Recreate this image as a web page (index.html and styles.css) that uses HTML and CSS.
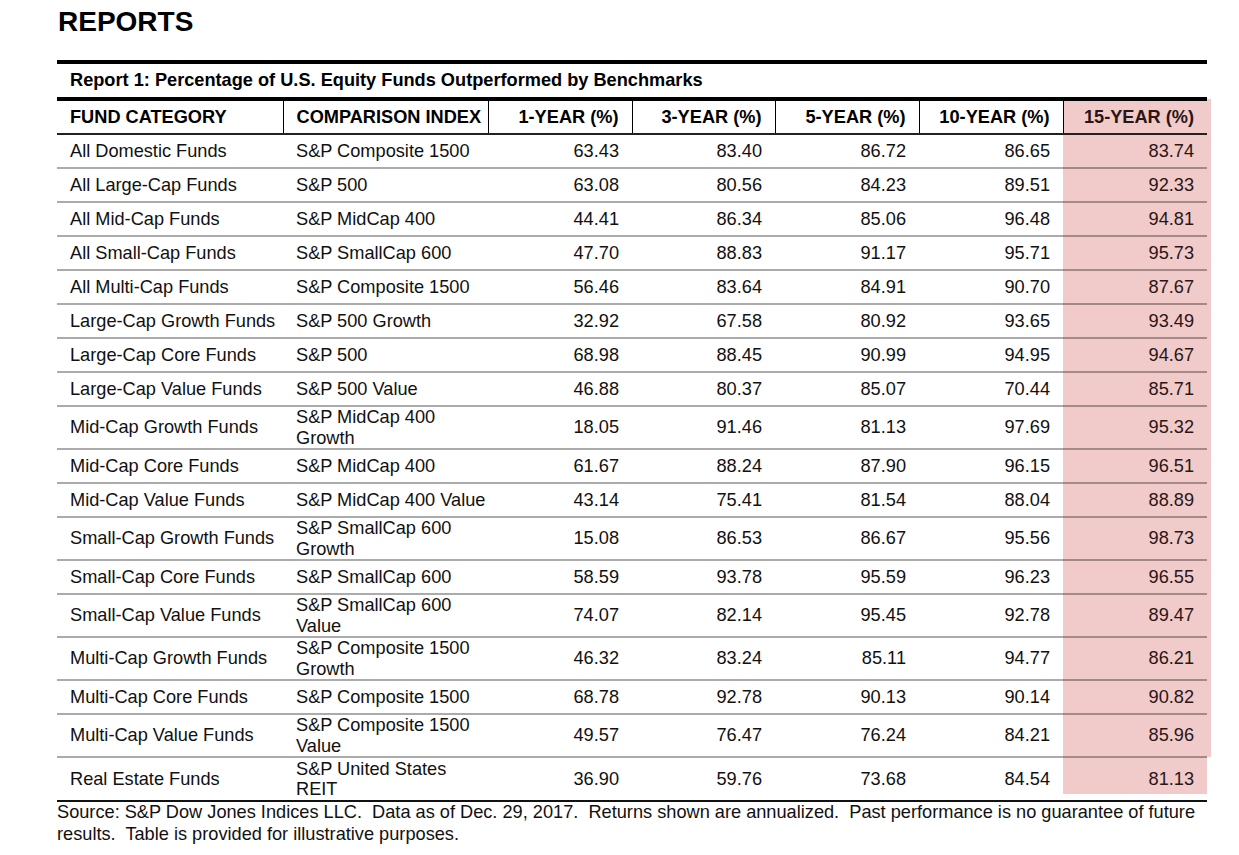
FILE: index.html
```html
<!DOCTYPE html>
<html lang="en">
<head>
<meta charset="utf-8">
<title>Reports</title>
<link rel="stylesheet" href="styles.css">
</head>
<body>
<div class="page">
  <h1 class="page-title">REPORTS</h1>
  <table class="report">
    <colgroup>
      <col class="c-cat"><col class="c-idx"><col class="c-num"><col class="c-num3"><col class="c-num"><col class="c-num"><col class="c-num">
    </colgroup>
    <thead>
      <tr class="cap-row"><th colspan="7" class="caption">Report 1: Percentage of U.S. Equity Funds Outperformed by Benchmarks</th></tr>
      <tr class="head">
        <th class="txt">FUND CATEGORY</th>
        <th class="txt idx">COMPARISON INDEX</th>
        <th class="num">1-YEAR (%)</th>
        <th class="num">3-YEAR (%)</th>
        <th class="num">5-YEAR (%)</th>
        <th class="num">10-YEAR (%)</th>
        <th class="num hl">15-YEAR (%)</th>
      </tr>
    </thead>
    <tbody>
      <tr><td class="txt">All Domestic Funds</td><td class="idx">S&amp;P Composite 1500</td><td class="num">63.43</td><td class="num">83.40</td><td class="num">86.72</td><td class="num">86.65</td><td class="num hl">83.74</td></tr>
      <tr><td class="txt">All Large-Cap Funds</td><td class="idx">S&amp;P 500</td><td class="num">63.08</td><td class="num">80.56</td><td class="num">84.23</td><td class="num">89.51</td><td class="num hl">92.33</td></tr>
      <tr><td class="txt">All Mid-Cap Funds</td><td class="idx">S&amp;P MidCap 400</td><td class="num">44.41</td><td class="num">86.34</td><td class="num">85.06</td><td class="num">96.48</td><td class="num hl">94.81</td></tr>
      <tr><td class="txt">All Small-Cap Funds</td><td class="idx">S&amp;P SmallCap 600</td><td class="num">47.70</td><td class="num">88.83</td><td class="num">91.17</td><td class="num">95.71</td><td class="num hl">95.73</td></tr>
      <tr><td class="txt">All Multi-Cap Funds</td><td class="idx">S&amp;P Composite 1500</td><td class="num">56.46</td><td class="num">83.64</td><td class="num">84.91</td><td class="num">90.70</td><td class="num hl">87.67</td></tr>
      <tr><td class="txt">Large-Cap Growth Funds</td><td class="idx">S&amp;P 500 Growth</td><td class="num">32.92</td><td class="num">67.58</td><td class="num">80.92</td><td class="num">93.65</td><td class="num hl">93.49</td></tr>
      <tr><td class="txt">Large-Cap Core Funds</td><td class="idx">S&amp;P 500</td><td class="num">68.98</td><td class="num">88.45</td><td class="num">90.99</td><td class="num">94.95</td><td class="num hl">94.67</td></tr>
      <tr><td class="txt">Large-Cap Value Funds</td><td class="idx">S&amp;P 500 Value</td><td class="num">46.88</td><td class="num">80.37</td><td class="num">85.07</td><td class="num">70.44</td><td class="num hl">85.71</td></tr>
      <tr class="two"><td class="txt">Mid-Cap Growth Funds</td><td class="idx">S&amp;P MidCap 400<br>Growth</td><td class="num">18.05</td><td class="num">91.46</td><td class="num">81.13</td><td class="num">97.69</td><td class="num hl">95.32</td></tr>
      <tr><td class="txt">Mid-Cap Core Funds</td><td class="idx">S&amp;P MidCap 400</td><td class="num">61.67</td><td class="num">88.24</td><td class="num">87.90</td><td class="num">96.15</td><td class="num hl">96.51</td></tr>
      <tr><td class="txt">Mid-Cap Value Funds</td><td class="idx">S&amp;P MidCap 400 Value</td><td class="num">43.14</td><td class="num">75.41</td><td class="num">81.54</td><td class="num">88.04</td><td class="num hl">88.89</td></tr>
      <tr class="two"><td class="txt">Small-Cap Growth Funds</td><td class="idx">S&amp;P SmallCap 600<br>Growth</td><td class="num">15.08</td><td class="num">86.53</td><td class="num">86.67</td><td class="num">95.56</td><td class="num hl">98.73</td></tr>
      <tr><td class="txt">Small-Cap Core Funds</td><td class="idx">S&amp;P SmallCap 600</td><td class="num">58.59</td><td class="num">93.78</td><td class="num">95.59</td><td class="num">96.23</td><td class="num hl">96.55</td></tr>
      <tr class="two"><td class="txt">Small-Cap Value Funds</td><td class="idx">S&amp;P SmallCap 600<br>Value</td><td class="num">74.07</td><td class="num">82.14</td><td class="num">95.45</td><td class="num">92.78</td><td class="num hl">89.47</td></tr>
      <tr class="two"><td class="txt">Multi-Cap Growth Funds</td><td class="idx">S&amp;P Composite 1500<br>Growth</td><td class="num">46.32</td><td class="num">83.24</td><td class="num">85.11</td><td class="num">94.77</td><td class="num hl">86.21</td></tr>
      <tr><td class="txt">Multi-Cap Core Funds</td><td class="idx">S&amp;P Composite 1500</td><td class="num">68.78</td><td class="num">92.78</td><td class="num">90.13</td><td class="num">90.14</td><td class="num hl">90.82</td></tr>
      <tr class="two"><td class="txt">Multi-Cap Value Funds</td><td class="idx">S&amp;P Composite 1500<br>Value</td><td class="num">49.57</td><td class="num">76.47</td><td class="num">76.24</td><td class="num">84.21</td><td class="num hl">85.96</td></tr>
      <tr class="last"><td class="txt">Real Estate Funds</td><td class="idx">S&amp;P United States<br>REIT</td><td class="num">36.90</td><td class="num">59.76</td><td class="num">73.68</td><td class="num">84.54</td><td class="num hl">81.13</td></tr>
    </tbody>
  </table>
  <p class="note">Source: S&amp;P Dow Jones Indices LLC.&nbsp; Data as of Dec. 29, 2017.&nbsp; Returns shown are annualized.&nbsp; Past performance is no guarantee of future results.&nbsp; Table is provided for illustrative purposes.</p>
</div>
</body>
</html>
```

FILE: styles.css
```css
html, body {
  margin: 0;
  padding: 0;
  background: #ffffff;
}

body {
  font-family: "Liberation Sans", Arial, sans-serif;
  color: #111111;
}

.page {
  padding-left: 57px;
  width: 1150px;
}

.page-title {
  margin: 0 0 22px 1px;
  padding-top: 6px;
  font-size: 28px;
  line-height: 32px;
  font-weight: bold;
  color: #000000;
}

.report {
  width: 1150px;
  table-layout: fixed;
  border-collapse: collapse;
  border-top: 4px solid #000000;
  font-size: 18.2px;
  line-height: 20.5px;
}

.c-cat { width: 226px; }
.c-idx { width: 205px; }
.c-num { width: 144px; }
.c-num3 { width: 143px; }

.report th,
.report td {
  padding: 0 13px;
  vertical-align: middle;
  font-weight: normal;
  white-space: nowrap;
}

.report .txt {
  padding-right: 0;
}

.caption {
  height: 33px;
  text-align: left;
  font-weight: bold !important;
  color: #000000;
  border-bottom: 4px solid #000000;
}

.head th {
  height: 32px;
  font-weight: bold;
  color: #000000;
  border-bottom: 2px solid #222222;
  border-right: 1px solid #000000;
}

.head th:last-child {
  border-right: none;
}

.txt { text-align: left; }
.num { text-align: right; }

.report .idx {
  text-align: left;
  padding-right: 0;
}

.report td {
  height: 32px;
  border-bottom: 2px solid #ababab;
}

.report tr.two td {
  height: 41px;
}

.report .hl {
  background: #f1caca;
  box-shadow: 4px 0 0 0 #f1caca;
  color: #2a1616;
}

.report td.hl {
  border-bottom-color: #a58888;
}

.report tr.last td {
  height: 42px;
  border-bottom: none;
}

.report tr.last td.hl {
  background: linear-gradient(to bottom, #f1caca calc(100% - 6px), #ffffff calc(100% - 6px));
  box-shadow: none;
}

.note {
  margin: 0;
  width: 1150px;
  border-top: 2px solid #111111;
  font-size: 18.2px;
  line-height: 21.5px;
  color: #111111;
}
```
